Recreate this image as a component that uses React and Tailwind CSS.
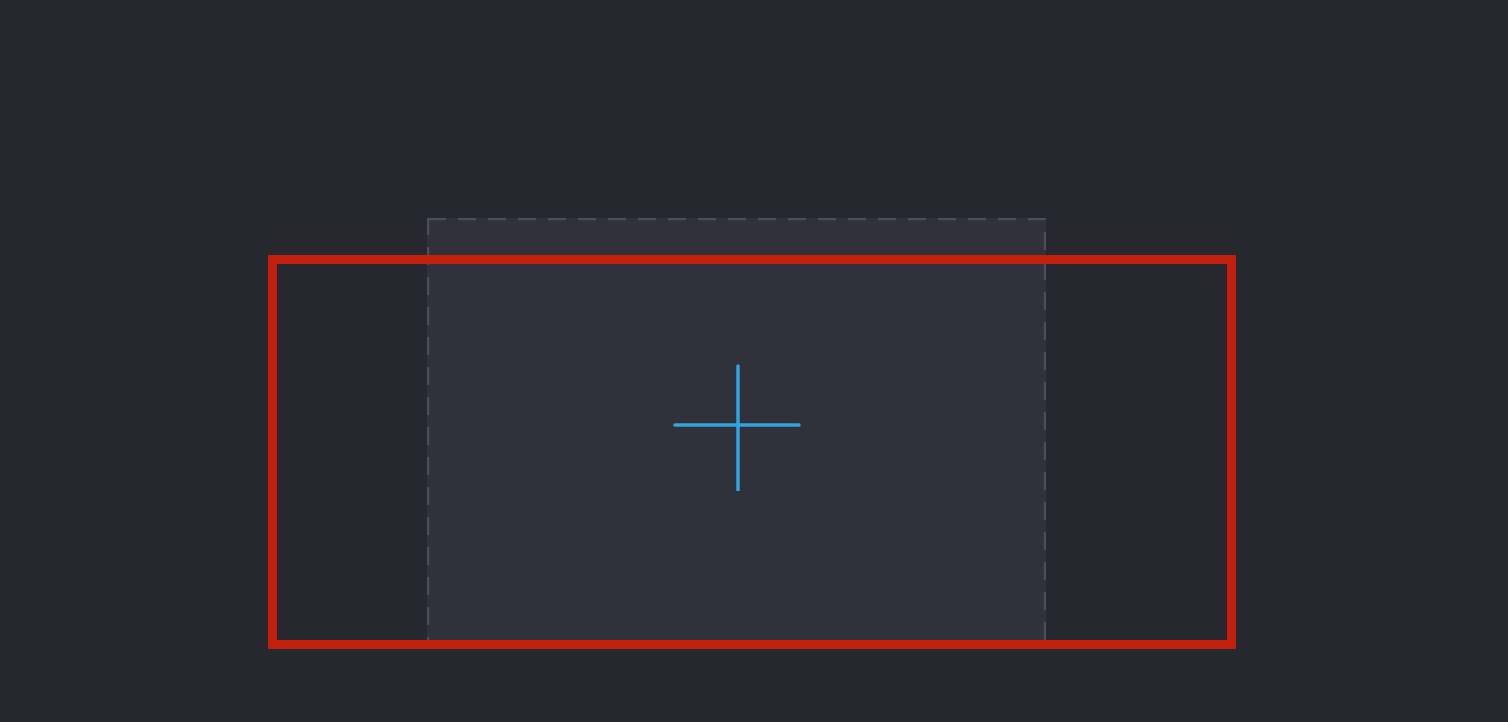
export default function App() {
  return (
    <div className="relative w-full h-[722px] bg-[#27272f] overflow-hidden">
      <div className="pt-[218px] pl-[427px]">
        {/* drop zone */}
        <div className="relative w-[619px] h-[428px] bg-[#31313c] flex items-center justify-center">
          <svg className="absolute inset-0" width="619" height="428">
            <rect
              x="1"
              y="1"
              width="617"
              height="426"
              fill="none"
              stroke="#4e4e5a"
              strokeWidth="2.5"
              strokeDasharray="18 12"
            />
          </svg>
          <svg width="128" height="128" viewBox="0 0 128 128" className="relative -translate-y-[5px]">
            <line x1="65" y1="3" x2="65" y2="127" stroke="#2ea6df" strokeWidth="3.5" strokeLinecap="round" />
            <line x1="2" y1="62" x2="126" y2="62" stroke="#2ea6df" strokeWidth="3.5" strokeLinecap="round" />
          </svg>
        </div>
      </div>
      {/* selection highlight */}
      <div className="absolute left-[268px] top-[255px] w-[968px] h-[394px] border-[9px] border-[#c2200c]" />
    </div>
  );
}
